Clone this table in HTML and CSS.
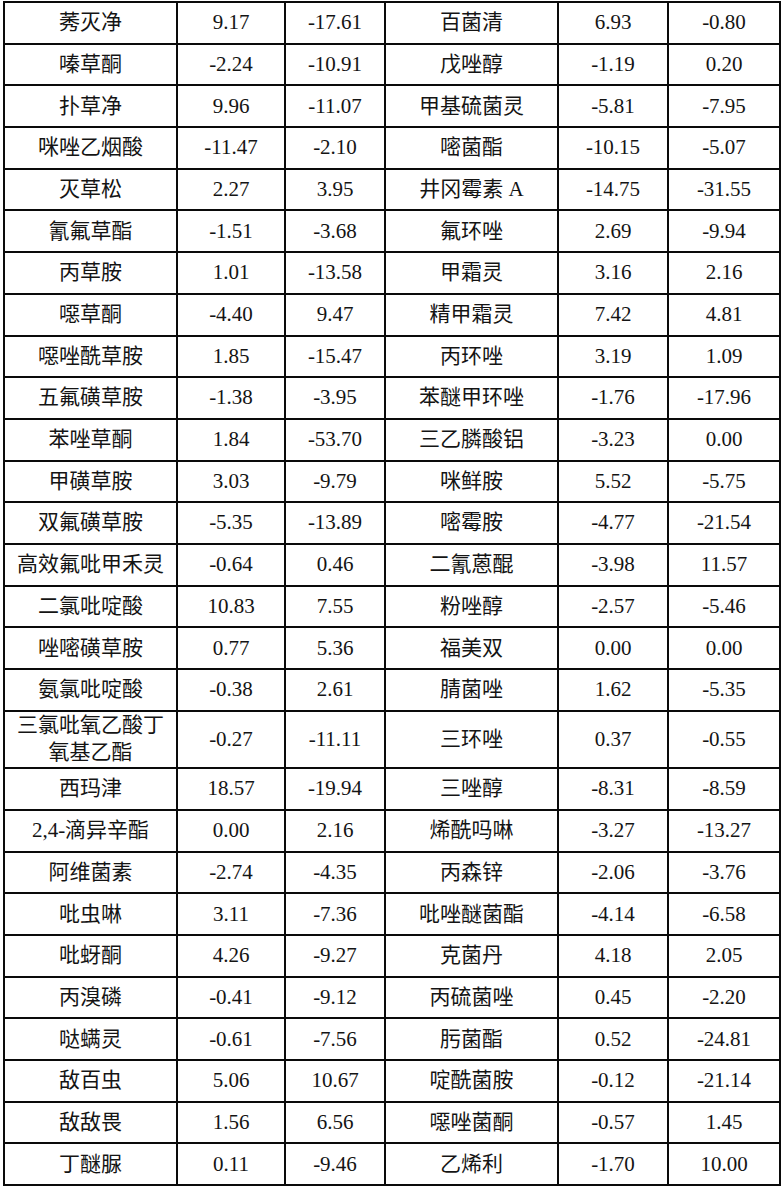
FILE: index.html
```html
<!DOCTYPE html>
<html lang="zh-CN">
<head>
<meta charset="utf-8">
<title>农药数据表</title>
<link rel="stylesheet" href="styles.css">
</head>
<body>
<div class="wrap">
<table class="data">
<colgroup>
<col class="c-name"><col class="c-v1"><col class="c-v2"><col class="c-name"><col class="c-v3"><col class="c-v4">
</colgroup>
<tbody>
<tr><td>莠灭净</td><td>9.17</td><td>-17.61</td><td>百菌清</td><td>6.93</td><td>-0.80</td></tr>
<tr><td>嗪草酮</td><td>-2.24</td><td>-10.91</td><td>戊唑醇</td><td>-1.19</td><td>0.20</td></tr>
<tr><td>扑草净</td><td>9.96</td><td>-11.07</td><td>甲基硫菌灵</td><td>-5.81</td><td>-7.95</td></tr>
<tr><td>咪唑乙烟酸</td><td>-11.47</td><td>-2.10</td><td>嘧菌酯</td><td>-10.15</td><td>-5.07</td></tr>
<tr><td>灭草松</td><td>2.27</td><td>3.95</td><td>井冈霉素 A</td><td>-14.75</td><td>-31.55</td></tr>
<tr><td>氰氟草酯</td><td>-1.51</td><td>-3.68</td><td>氟环唑</td><td>2.69</td><td>-9.94</td></tr>
<tr><td>丙草胺</td><td>1.01</td><td>-13.58</td><td>甲霜灵</td><td>3.16</td><td>2.16</td></tr>
<tr><td>噁草酮</td><td>-4.40</td><td>9.47</td><td>精甲霜灵</td><td>7.42</td><td>4.81</td></tr>
<tr><td>噁唑酰草胺</td><td>1.85</td><td>-15.47</td><td>丙环唑</td><td>3.19</td><td>1.09</td></tr>
<tr><td>五氟磺草胺</td><td>-1.38</td><td>-3.95</td><td>苯醚甲环唑</td><td>-1.76</td><td>-17.96</td></tr>
<tr><td>苯唑草酮</td><td>1.84</td><td>-53.70</td><td>三乙膦酸铝</td><td>-3.23</td><td>0.00</td></tr>
<tr><td>甲磺草胺</td><td>3.03</td><td>-9.79</td><td>咪鲜胺</td><td>5.52</td><td>-5.75</td></tr>
<tr><td>双氟磺草胺</td><td>-5.35</td><td>-13.89</td><td>嘧霉胺</td><td>-4.77</td><td>-21.54</td></tr>
<tr><td>高效氟吡甲禾灵</td><td>-0.64</td><td>0.46</td><td>二氰蒽醌</td><td>-3.98</td><td>11.57</td></tr>
<tr><td>二氯吡啶酸</td><td>10.83</td><td>7.55</td><td>粉唑醇</td><td>-2.57</td><td>-5.46</td></tr>
<tr><td>唑嘧磺草胺</td><td>0.77</td><td>5.36</td><td>福美双</td><td>0.00</td><td>0.00</td></tr>
<tr><td>氨氯吡啶酸</td><td>-0.38</td><td>2.61</td><td>腈菌唑</td><td>1.62</td><td>-5.35</td></tr>
<tr class="tall"><td>三氯吡氧乙酸丁氧基乙酯</td><td>-0.27</td><td>-11.11</td><td>三环唑</td><td>0.37</td><td>-0.55</td></tr>
<tr><td>西玛津</td><td>18.57</td><td>-19.94</td><td>三唑醇</td><td>-8.31</td><td>-8.59</td></tr>
<tr><td>2,4-滴异辛酯</td><td>0.00</td><td>2.16</td><td>烯酰吗啉</td><td>-3.27</td><td>-13.27</td></tr>
<tr><td>阿维菌素</td><td>-2.74</td><td>-4.35</td><td>丙森锌</td><td>-2.06</td><td>-3.76</td></tr>
<tr><td>吡虫啉</td><td>3.11</td><td>-7.36</td><td>吡唑醚菌酯</td><td>-4.14</td><td>-6.58</td></tr>
<tr><td>吡蚜酮</td><td>4.26</td><td>-9.27</td><td>克菌丹</td><td>4.18</td><td>2.05</td></tr>
<tr><td>丙溴磷</td><td>-0.41</td><td>-9.12</td><td>丙硫菌唑</td><td>0.45</td><td>-2.20</td></tr>
<tr><td>哒螨灵</td><td>-0.61</td><td>-7.56</td><td>肟菌酯</td><td>0.52</td><td>-24.81</td></tr>
<tr><td>敌百虫</td><td>5.06</td><td>10.67</td><td>啶酰菌胺</td><td>-0.12</td><td>-21.14</td></tr>
<tr><td>敌敌畏</td><td>1.56</td><td>6.56</td><td>噁唑菌酮</td><td>-0.57</td><td>1.45</td></tr>
<tr><td>丁醚脲</td><td>0.11</td><td>-9.46</td><td>乙烯利</td><td>-1.70</td><td>10.00</td></tr>
</tbody>
</table>
</div>
</body>
</html>
```
FILE: styles.css
```css
html, body {
  margin: 0;
  padding: 0;
  background: #ffffff;
}

.wrap {
  padding: 1px 0 0 3px;
}

.data {
  border-collapse: collapse;
  table-layout: fixed;
  width: 778px;
  font-family: "Liberation Serif", "Noto Sans CJK SC", serif;
  font-size: 21px;
  color: #141414;
}

.c-name { width: 173px; }
.c-v1 { width: 108px; }
.c-v2 { width: 100px; }
.c-v3 { width: 110px; }
.c-v4 { width: 112px; }

.data tr {
  height: 41.7px;
}

.data tr.tall {
  height: 57.6px;
}

.data td {
  border: 2px solid #0a0a0a;
  padding: 0 6px;
  text-align: center;
  vertical-align: middle;
  line-height: 1.3;
}
```
